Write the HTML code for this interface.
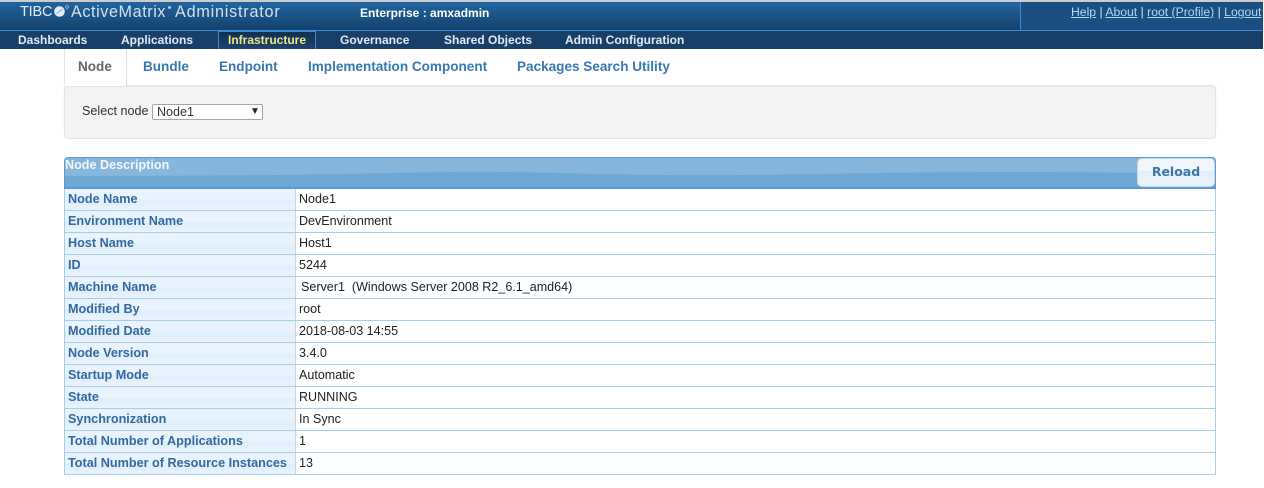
<!DOCTYPE html>
<html><head><meta charset="utf-8"><style>
html,body{margin:0;padding:0;background:#fff;width:1264px;height:488px;overflow:hidden;font-family:"Liberation Sans",sans-serif;font-size:12.55px}
.a{position:absolute;white-space:nowrap}
#top{left:0;top:0;width:1263px;height:2px;background:#ccc}
#hd{left:0;top:2px;width:1263px;height:28px;background:linear-gradient(#20649f,#16426d)}
#ln{left:0;top:30px;width:1263px;height:1px;background:#3a8ad6}
#nv{left:0;top:31px;width:1263px;height:18px;background:#183f67}
#rt{left:1020px;top:2px;width:243px;height:28px;border-left:1px solid #3a8ad6;box-sizing:border-box;background:#1b4f80}
.n{top:31px;height:18px;line-height:18px;font-weight:bold;color:#dfeaf4;font-size:12px}
.t{top:49px;height:36px;line-height:35px;font-weight:bold;font-size:13.55px;color:#3a78b5}
.r{left:64px;width:1152px;height:22px;box-sizing:border-box;border-left:1px solid #a8cde6;border-right:1px solid #a8cde6;border-bottom:1px solid #a8cde6}
.l{position:absolute;left:0;top:0;height:21px;border-right:1px solid #bcd8ee;background:linear-gradient(#e8f3fd 0,#e8f3fd 50%,#dfeefb 50%,#e8f3fd 100%);line-height:21px;font-weight:bold;color:#33699f;padding-left:3px;width:227px;font-size:12.65px}
.v{position:absolute;left:234px;top:0;line-height:21px;color:#222}
.lg{top:3px;line-height:18px;color:#d5e1ec}
</style></head><body>
<div class="a" id="top"></div><div class="a" id="hd"></div><div class="a" id="rt"></div><div class="a" id="ln"></div><div class="a" id="nv"></div>
<div class="a lg" style="left:20px;font-size:14.5px;letter-spacing:-.2px;color:#e4edf5">TIBC</div>
<svg class="a" style="left:54px;top:5px" width="15" height="13"><circle cx="5.5" cy="6.5" r="5.3" fill="#e4edf5"/><path d="M2.5 8.5 L8.5 4" stroke="#7fa3c4" stroke-width=".8"/><circle cx="13" cy="2" r="1.3" fill="none" stroke="#c8d6e3" stroke-width=".7"/></svg>
<div class="a lg" style="left:71px;font-size:16.2px;letter-spacing:.58px">ActiveMatrix</div>
<div class="a" style="left:168px;top:6px;width:3px;height:3px;border-radius:50%;background:#b9cbdc"></div>
<div class="a lg" style="left:175px;font-size:16.2px;letter-spacing:.78px">Administrator</div>
<div class="a" style="left:360px;top:6px;line-height:14px;font-weight:bold;color:#fff;font-size:12px">Enterprise : amxadmin</div>
<div class="a" style="left:1071px;top:5px;line-height:14px;color:#cfe3f2;font-size:12.2px"><u style="color:#a9dcf5">Help</u> | <u style="color:#a9dcf5">About</u> | <u style="color:#a9dcf5">root (Profile)</u> | <u style="color:#a9dcf5">Logout</u></div>
<div class="a n" style="left:18px">Dashboards</div>
<div class="a n" style="left:121px">Applications</div>
<div class="a" style="left:218px;top:31px;width:98px;height:18px;box-sizing:border-box;border:1px solid #3a8ad6;border-bottom:0;background:linear-gradient(#12304f,#1a4470)"></div>
<div class="a n" style="left:228px;color:#f1e58a">Infrastructure</div>
<div class="a n" style="left:340px">Governance</div>
<div class="a n" style="left:444px">Shared Objects</div>
<div class="a n" style="left:565px">Admin Configuration</div>
<div class="a" style="left:64px;top:86px;width:1152px;height:53px;box-sizing:border-box;background:#f3f3f3;border:1px solid #e3e3e3;border-top-color:#e6e6e6;border-radius:4px;box-shadow:0 -1px 1px #e4e4e4"></div>
<div class="a" style="left:64px;top:49px;width:63px;height:37px;box-sizing:border-box;border-left:1px solid #e6e6e6;border-right:1px solid #ddd;background:#fff;z-index:2"></div>
<div class="a t" style="left:78px;color:#666;z-index:3">Node</div>
<div class="a t" style="left:143px">Bundle</div>
<div class="a t" style="left:219px">Endpoint</div>
<div class="a t" style="left:308px">Implementation Component</div>
<div class="a t" style="left:517px">Packages Search Utility</div>
<div class="a" style="left:82px;top:104px;line-height:15px;color:#333;font-size:12.6px">Select node</div>
<div class="a" style="left:152px;top:104px;width:111px;height:16px;box-sizing:border-box;background:#fff;border:1px solid #a6a6a6;border-radius:2px;line-height:14px;padding-left:4px;color:#333">Node1<span style="position:absolute;left:97px;top:0;font-size:10px;color:#223">▼</span></div>
<div class="a" style="left:64px;top:157px;width:1152px;height:32px;box-sizing:border-box;border:1px solid #5a9bd0;border-bottom:2px solid #5a9bd0;border-radius:4px 4px 0 0;background:#6fa8d4;overflow:hidden">
<svg width="1152" height="30" style="position:absolute;left:0;top:0"><path d="M0 0H1152V16C1100 15 1000 14 940 14 800 14 700 18 600 17 500 16 450 13 390 14 300 15 240 18 0 18Z" fill="#87b6dc"/></svg></div>
<div class="a" style="left:65px;top:158px;line-height:15px;font-weight:bold;color:#f2f8fd;font-size:12.6px">Node Description</div>
<div class="a" style="left:1137px;top:158px;width:78px;height:29px;box-sizing:border-box;border:1px solid #c4dbee;border-radius:5px;background:linear-gradient(#f0f6fc 0,#f0f6fc 45%,#e2effb 45%,#e9f3fc 100%);text-align:center;line-height:26px;font-weight:bold;color:#3f74a8;font-family:'DejaVu Sans',sans-serif;font-size:12.5px">Reload</div>
<div class="a r" style="top:189px"><div class="l" style="line-height:20px">Node Name</div><div class="v" style="line-height:20px">Node1</div></div>
<div class="a r" style="top:211px"><div class="l">Environment Name</div><div class="v">DevEnvironment</div></div>
<div class="a r" style="top:233px"><div class="l">Host Name</div><div class="v">Host1</div></div>
<div class="a r" style="top:255px"><div class="l">ID</div><div class="v">5244</div></div>
<div class="a r" style="top:277px"><div class="l">Machine Name</div><div class="v" style="padding-left:2px">Server1&nbsp; (Windows Server 2008 R2_6.1_amd64)</div></div>
<div class="a r" style="top:299px"><div class="l">Modified By</div><div class="v">root</div></div>
<div class="a r" style="top:321px"><div class="l">Modified Date</div><div class="v">2018-08-03 14:55</div></div>
<div class="a r" style="top:343px"><div class="l">Node Version</div><div class="v">3.4.0</div></div>
<div class="a r" style="top:365px"><div class="l">Startup Mode</div><div class="v">Automatic</div></div>
<div class="a r" style="top:387px"><div class="l">State</div><div class="v">RUNNING</div></div>
<div class="a r" style="top:409px"><div class="l">Synchronization</div><div class="v">In Sync</div></div>
<div class="a r" style="top:431px"><div class="l">Total Number of Applications</div><div class="v">1</div></div>
<div class="a r" style="top:453px"><div class="l">Total Number of Resource Instances</div><div class="v">13</div></div>
</body></html>
